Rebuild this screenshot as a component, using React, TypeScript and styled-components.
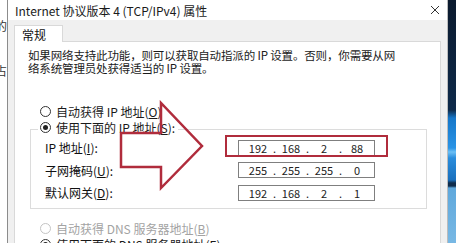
import React from "react";
import styled, { createGlobalStyle } from "styled-components";

const FONT = `"Noto Sans CJK SC", "Noto Sans", sans-serif`;

const Global = createGlobalStyle`
  html, body { margin: 0; padding: 0; background: #fff; }
  body { font-family: ${FONT}; }
`;

const Stage = styled.div`
  position: relative;
  width: 456px;
  height: 243px;
  overflow: hidden;
  display: flex;
  font-family: ${FONT};
  font-size: 12px;
  color: #111;
`;

// sliver of the window behind the dialog
const BackWindow = styled.div`
  width: 7px;
  flex-shrink: 0;
  background: #fff;
  display: flex;
  flex-direction: column;
  overflow: hidden;
`;
const BackChar = styled.div<{ top: number }>`
  display: flex;
  justify-content: flex-end;
  margin-top: ${({ top }) => top}px;
  line-height: 14px;
  white-space: nowrap;
  color: #333;
`;

const Dialog = styled.div`
  flex: 1;
  display: flex;
  flex-direction: column;
  background: #f0f0f0;
  border-left: 1px solid #8c8c8c;
  border-right: 1px solid #bcbcbc;
  min-width: 0;
`;

const TitleBar = styled.div`
  height: 20px;
  flex-shrink: 0;
  background: #fff;
  display: flex;
  align-items: center;
  justify-content: space-between;
  padding: 0 7px;
  font-size: 12px;
  color: #1a1a1a;
`;

const Body = styled.div`
  flex: 1;
  display: flex;
  flex-direction: column;
  padding: 5px 6px 0 6px;
`;

const Tab = styled.div`
  position: relative;
  z-index: 1;
  width: 49px;
  height: 17px;
  box-sizing: border-box;
  padding-left: 7px;
  line-height: 16px;
  background: #fff;
  border: 1px solid #d9d9d9;
  border-bottom: none;
  margin-bottom: -1px;
  padding-top: 1px;
`;

const Panel = styled.div`
  flex: 1;
  background: #fff;
  border: 1px solid #d9d9d9;
  padding: 7px 13px 0 13px;
  display: flex;
  flex-direction: column;
`;

const Intro = styled.div`
  font-size: 11.5px;
  letter-spacing: -0.15px;
  line-height: 13px;
  white-space: nowrap;
  color: #1a1a1a;
`;

const RadioRow = styled.div<{ disabled?: boolean; gapTop?: number }>`
  display: flex;
  align-items: center;
  gap: 5px;
  height: 16px;
  margin-left: 12px;
  margin-top: ${({ gapTop }) => gapTop ?? 0}px;
  white-space: nowrap;
  color: ${({ disabled }) => (disabled ? "#a3a3a3" : "#1a1a1a")};
`;

const Radio = styled.span<{ checked?: boolean; disabled?: boolean }>`
  width: 11px;
  height: 11px;
  box-sizing: border-box;
  border-radius: 50%;
  border: 1px solid ${({ disabled }) => (disabled ? "#c4c4c4" : "#333")};
  display: flex;
  align-items: center;
  justify-content: center;
  flex-shrink: 0;
  &::after {
    content: "";
    width: 5px;
    height: 5px;
    border-radius: 50%;
    background: ${({ checked }) => (checked ? "#222" : "transparent")};
  }
`;

const Group = styled.fieldset`
  margin: 0 0 0 2px;
  padding: 0 0 7px 7px;
  border: 1px solid #dcdcdc;
  display: flex;
  flex-direction: column;
  gap: 5.5px;
  min-width: 0;
`;

const Legend = styled.legend`
  padding: 0 3px 4px 2px;
  & > div {
    margin-left: 0;
  }
`;

const FieldRow = styled.div`
  display: flex;
  align-items: center;
  height: 17px;
  padding-left: 7px;
`;

const FieldLabel = styled.span`
  width: 193px;
  flex-shrink: 0;
  white-space: nowrap;
`;

const Key = styled.span`
  text-decoration: underline;
`;

const IpBox = styled.div`
  position: relative;
  width: 137px;
  height: 16px;
  box-sizing: border-box;
  border: 1px solid #7f7f7f;
  background: #fff;
  display: flex;
  align-items: center;
  padding-left: 7px;
  font-size: 11px;
  color: #222;
`;

const Octet = styled.span`
  width: 24px;
  text-align: center;
`;
const Dot = styled.span`
  width: 9px;
  text-align: center;
`;

const Highlight = styled.span`
  position: absolute;
  left: -14px;
  right: -14px;
  top: -6px;
  bottom: -2px;
  border: 2px solid #b02c3c;
  pointer-events: none;
`;

const Desktop = styled.div`
  width: 8px;
  flex-shrink: 0;
  background: linear-gradient(
    to bottom,
    #0b1a2e 0px,
    #0e2a4a 110px,
    #1677c9 118px,
    #2a94e6 148px,
    #6cc0f5 152px,
    #2a8ddc 158px,
    #1a70bd 180px,
    #0f2c4c 183px,
    #0f2c4c 186px,
    #5fa8dc 188px,
    #78b8e4 243px
  );
`;

const ArrowLayer = styled.svg`
  position: absolute;
  left: 118px;
  top: 100px;
  pointer-events: none;
`;

const CloseIcon = () => (
  <svg width="10" height="10" viewBox="0 0 10 10">
    <path d="M1 1L9 9M9 1L1 9" stroke="#333" strokeWidth="1" fill="none" />
  </svg>
);

const IpField = ({ parts, highlight }: { parts: string[]; highlight?: boolean }) => (
  <IpBox>
    {parts.map((p, i) => (
      <React.Fragment key={i}>
        <Octet>{p}</Octet>
        {i < 3 && <Dot>.</Dot>}
      </React.Fragment>
    ))}
    {highlight && <Highlight />}
  </IpBox>
);

export default function App() {
  return (
    <>
      <Global />
      <Stage>
        <BackWindow>
          <BackChar top={19}>的</BackChar>
          <BackChar top={31}>占</BackChar>
        </BackWindow>
        <Dialog>
          <TitleBar>
            <span>Internet 协议版本 4 (TCP/IPv4) 属性</span>
            <CloseIcon />
          </TitleBar>
          <Body>
            <Tab>常规</Tab>
            <Panel>
              <Intro>
                如果网络支持此功能，则可以获取自动指派的 IP 设置。否则，你需要从网
                <br />
                络系统管理员处获得适当的 IP 设置。
              </Intro>
              <RadioRow gapTop={28}>
                <Radio />
                <span>自动获得 IP 地址(<Key>O</Key>)</span>
              </RadioRow>
              <Group>
                <Legend>
                  <RadioRow>
                    <Radio checked />
                    <span>使用下面的 IP 地址(<Key>S</Key>):</span>
                  </RadioRow>
                </Legend>
                <FieldRow>
                  <FieldLabel>IP 地址(<Key>I</Key>):</FieldLabel>
                  <IpField parts={["192", "168", "2", "88"]} highlight />
                </FieldRow>
                <FieldRow>
                  <FieldLabel>子网掩码(<Key>U</Key>):</FieldLabel>
                  <IpField parts={["255", "255", "255", "0"]} />
                </FieldRow>
                <FieldRow>
                  <FieldLabel>默认网关(<Key>D</Key>):</FieldLabel>
                  <IpField parts={["192", "168", "2", "1"]} />
                </FieldRow>
              </Group>
              <RadioRow disabled gapTop={11}>
                <Radio disabled />
                <span>自动获得 DNS 服务器地址(<Key>B</Key>)</span>
              </RadioRow>
              <RadioRow>
                <Radio checked />
                <span>使用下面的 DNS 服务器地址(<Key>E</Key>):</span>
              </RadioRow>
            </Panel>
          </Body>
        </Dialog>
        <Desktop />
        <ArrowLayer width="92" height="92" viewBox="0 0 92 92">
          <polygon
            points="3,33 43,33 43,3 84,46 43,88 43,67 3,67"
            fill="none"
            stroke="#b02c3c"
            strokeWidth="2.5"
            strokeLinejoin="miter"
          />
        </ArrowLayer>
      </Stage>
    </>
  );
}
